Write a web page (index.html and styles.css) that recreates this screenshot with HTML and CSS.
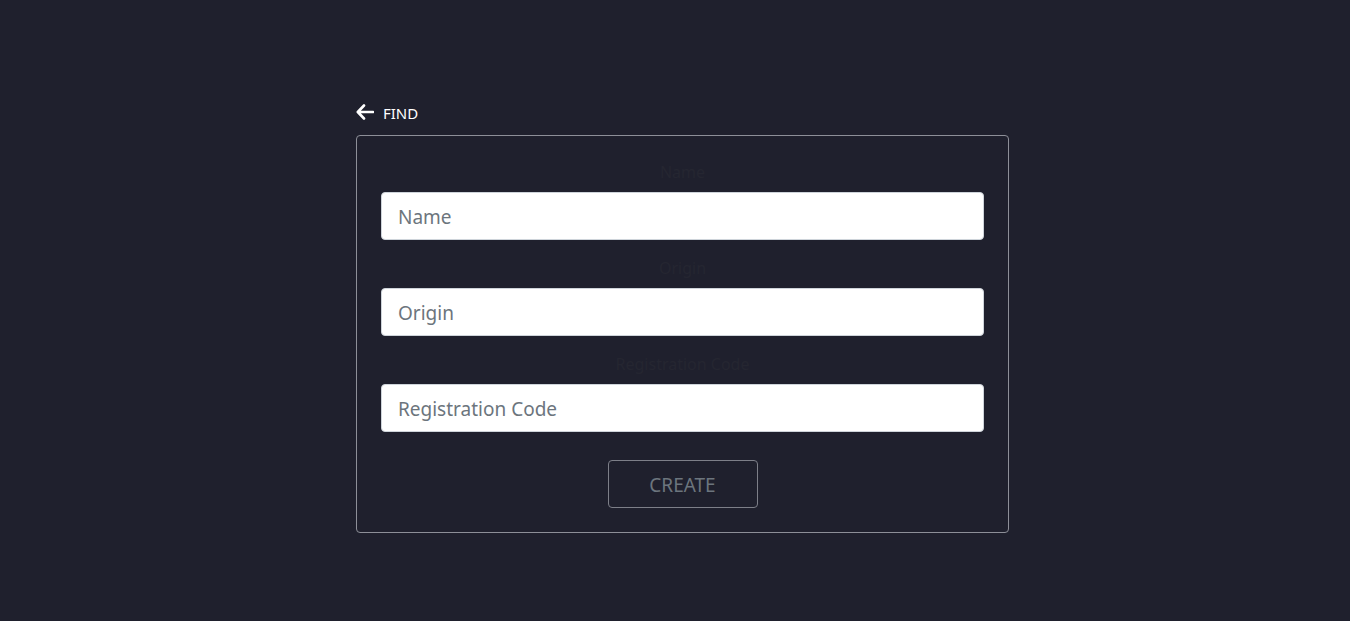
FILE: index.html
```html
<!DOCTYPE html>
<html>
<head>
<meta charset="utf-8">
<link rel="stylesheet" href="styles.css">
</head>
<body>
<main class="page">
  <div class="wrap">
    <a class="back" href="#">
      <svg class="back-icon" viewBox="0 0 18 16" width="18" height="16"><path d="M8 1.5 L1.8 8 L8 14.5 M2 8 H17" fill="none" stroke="#fff" stroke-width="2.6" stroke-linecap="round" stroke-linejoin="round"/></svg>
      <span>FIND</span>
    </a>
    <form class="card">
      <div class="group">
        <label class="label">Name</label>
        <input class="input" placeholder="Name">
      </div>
      <div class="group">
        <label class="label">Origin</label>
        <input class="input" placeholder="Origin">
      </div>
      <div class="group">
        <label class="label">Registration Code</label>
        <input class="input" placeholder="Registration Code">
      </div>
      <div class="actions">
        <button type="button" class="btn">CREATE</button>
      </div>
    </form>
  </div>
</main>
</body>
</html>
```

FILE: styles.css
```css
html, body {
  margin: 0;
  padding: 0;
  background: #1f202d;
  font-family: "Noto Sans", "Open Sans", sans-serif;
}
.page {
  display: flex;
  justify-content: center;
  padding-top: 101px;
  padding-left: 15px;
}
.wrap {
  width: 653px;
}
.back {
  display: flex;
  align-items: center;
  gap: 9px;
  height: 24px;
  color: #fff;
  text-decoration: none;
  font-size: 15px;
  margin-bottom: 10px;
}
.back-icon {
  display: block;
  margin-top: -2px;
}
.card {
  border: 1px solid #8d8f98;
  border-radius: 4px;
  padding: 8px 24px 24px;
  display: flex;
  flex-direction: column;
}
.group {
  display: flex;
  flex-direction: column;
  margin-top: 16px;
}
.label {
  text-align: center;
  font-size: 16px;
  line-height: 24px;
  color: #252631;
  margin-bottom: 8px;
}
.input {
  box-sizing: border-box;
  height: 48px;
  border: 1px solid #ced4da;
  border-radius: 4px;
  background: #fff;
  padding: 2px 16px 0;
  font-family: inherit;
  font-size: 19px;
  color: #495057;
  outline: none;
}
.input::placeholder {
  color: #6c757d;
}
.actions {
  display: flex;
  justify-content: center;
  margin-top: 28px;
}
.btn {
  width: 150px;
  height: 48px;
  background: transparent;
  border: 1px solid #7d7f88;
  border-radius: 4px;
  color: #6c757d;
  font-family: inherit;
  font-size: 19px;
  padding-top: 2px;
}
```
